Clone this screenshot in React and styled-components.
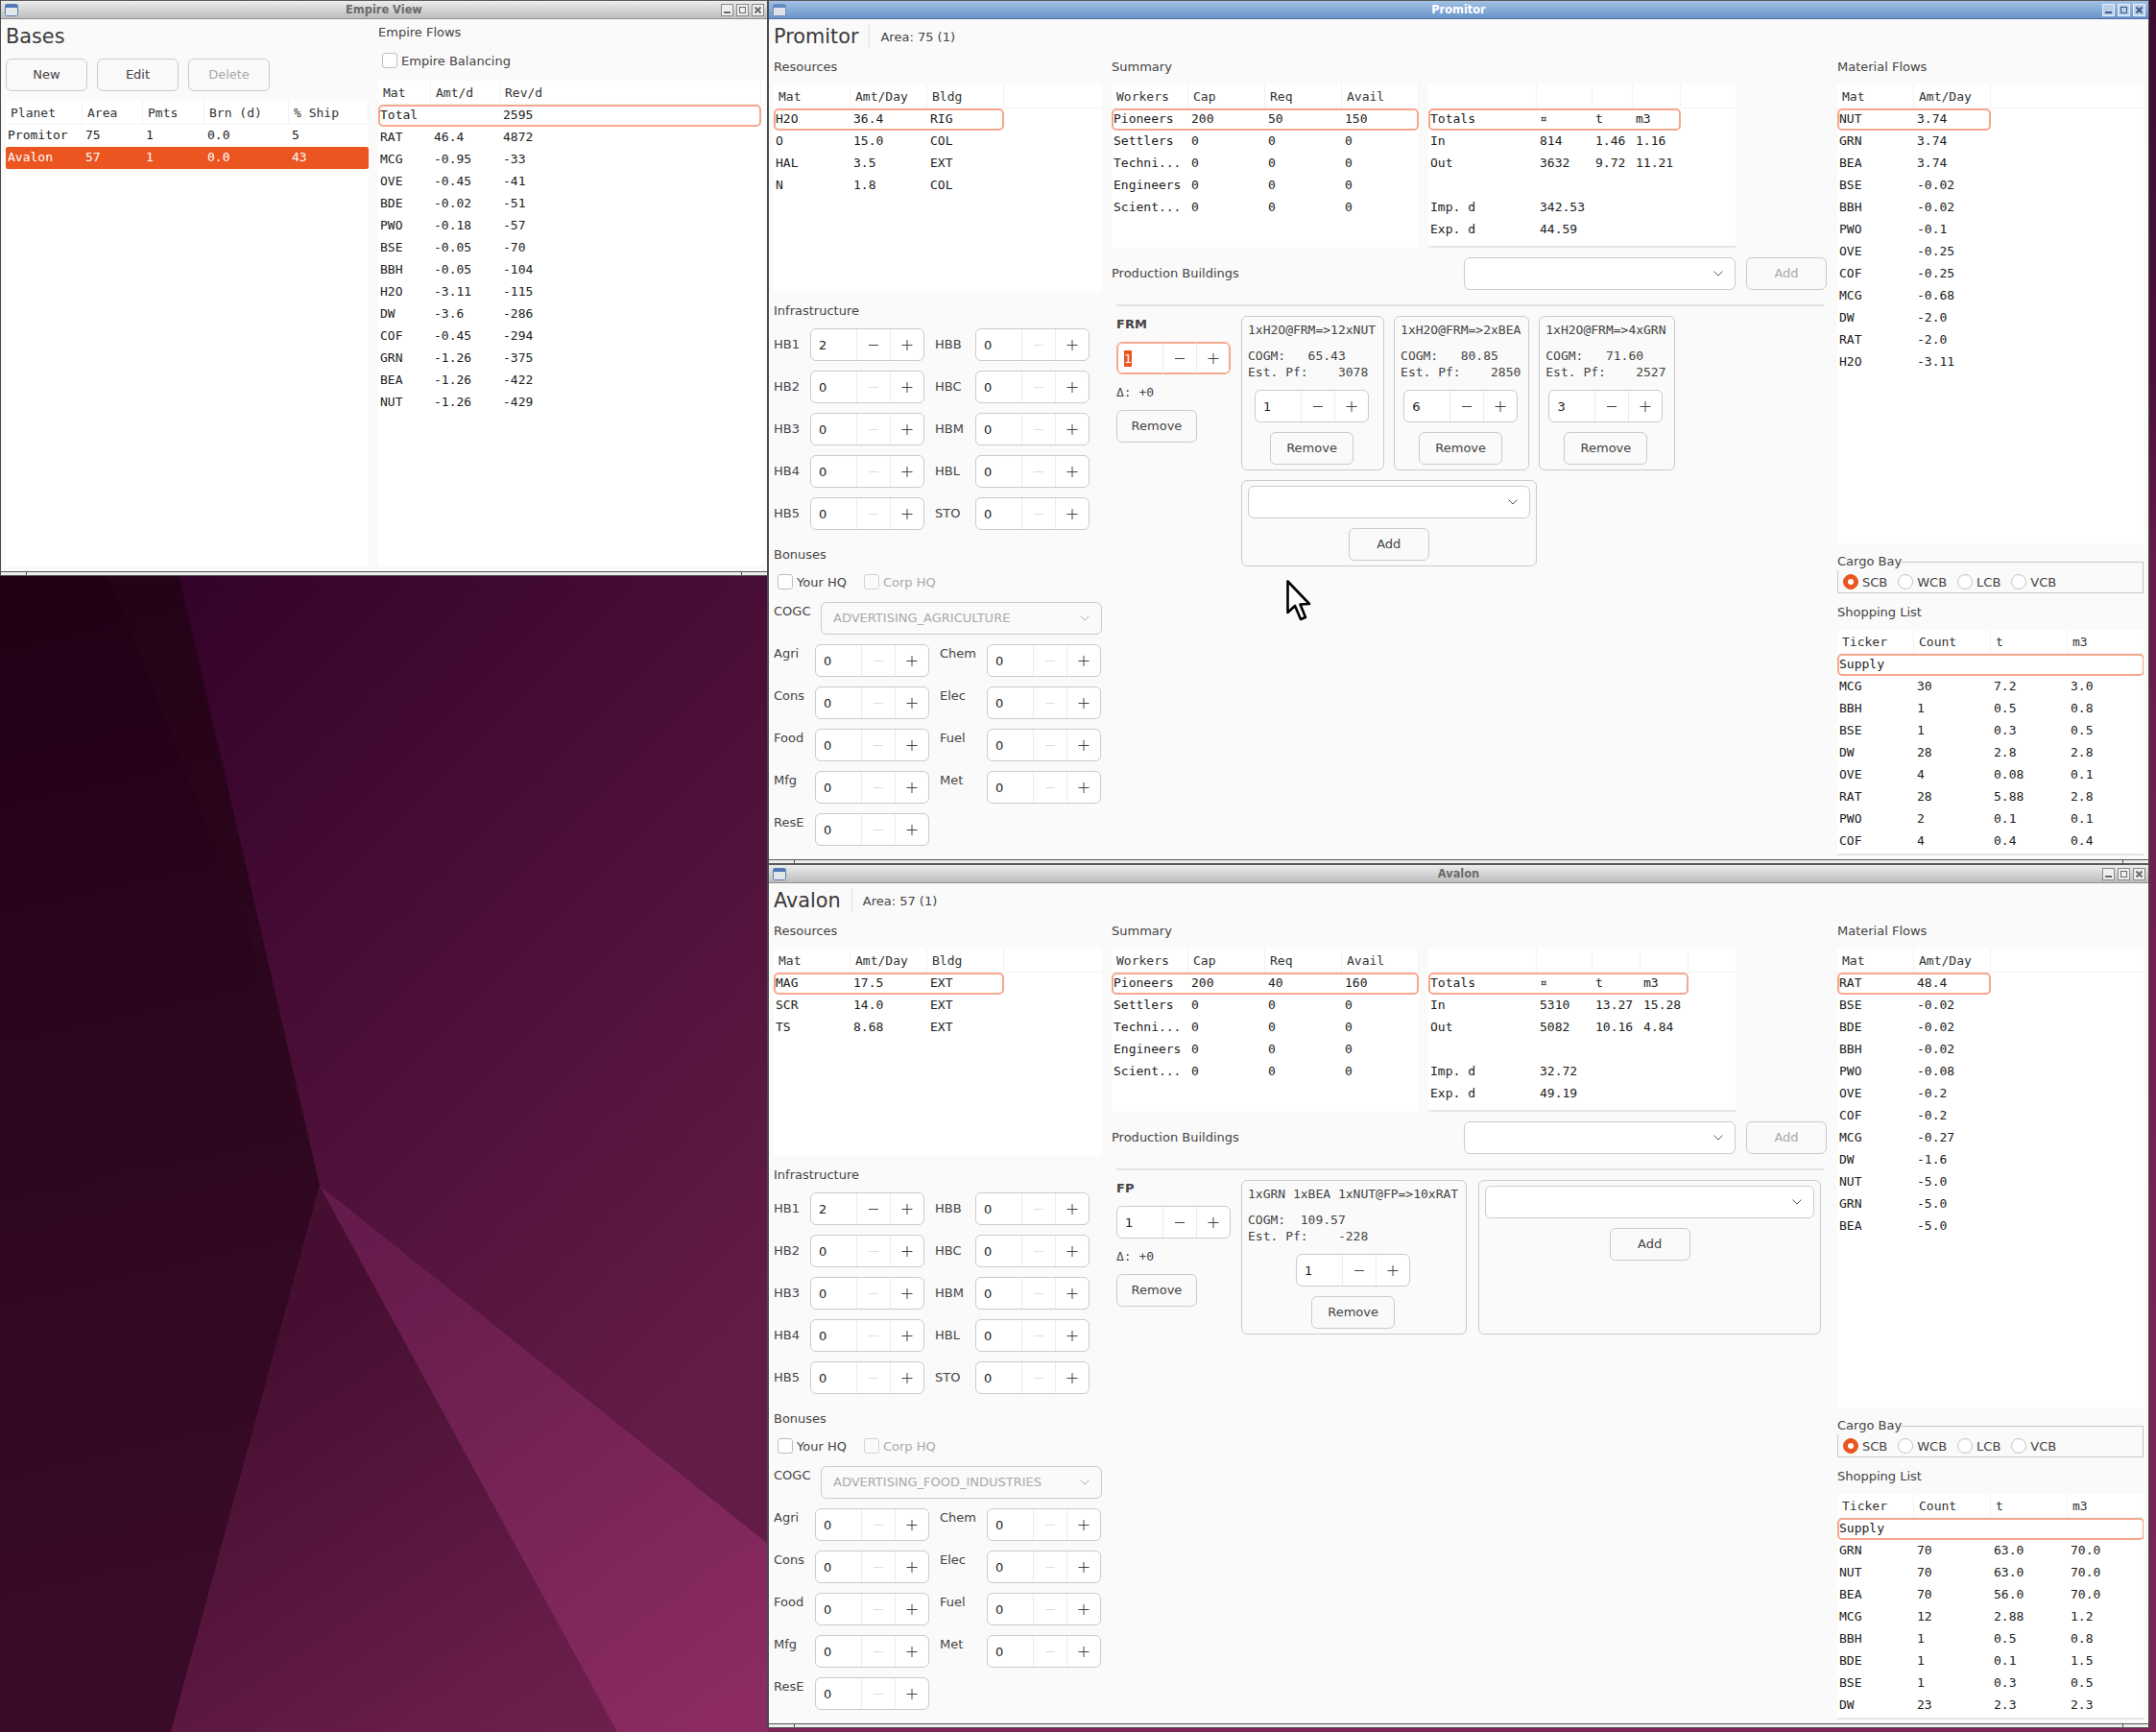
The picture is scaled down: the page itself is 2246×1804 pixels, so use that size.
import React from 'react';
import styled, { createGlobalStyle } from 'styled-components';

const GlobalStyle = createGlobalStyle`
    * { box-sizing: border-box; }
    html, body { margin: 0; padding: 0; background: #2a0a20; }
    body { font-family: "DejaVu Sans", sans-serif; font-size: 13px; color: #333; }
`

const Desktop = styled.div`
    position: relative;
    width: 2246px;
    height: 1804px;
    overflow: hidden;
`
const WallpaperSvg = styled.svg`
    position: absolute;
    left: 0;
    top: 0;
`
const Window = styled.div`
    position: absolute;
    left: ${p => p.$x}px;
    top: ${p => p.$y}px;
    width: ${p => p.$w}px;
    height: ${p => p.$h}px;
    display: flex;
    flex-direction: column;
    background: #fafafa;
    border-left: ${p => p.$edge}px solid #4a4a4a;
    border-right: ${p => (p.$edge > 1 ? 1 : 0)}px solid #4a4a4a;
`
const TitleBar = styled.div`
    position: relative;
    flex: none;
    height: 20px;
    display: flex;
    align-items: center;
    justify-content: center;
    padding-bottom: 1px;
    border-top: 1px solid #5a5a5a;
    border-bottom: 1px solid ${p => (p.$active ? '#4d6f9e' : '#8e8e8e')};
    background: ${p => (p.$active ? 'linear-gradient(#a2c1e5, #6a94c9)' : 'linear-gradient(#ececec, #bdbdbd)')};
    color: ${p => (p.$active ? '#fff' : '#6a6a6a')};
    font-size: 11.4px;
    font-weight: bold;
`
const TitleIcon = styled.svg`
    position: absolute;
    left: 4px;
    top: 3px;
`
const TitleButtons = styled.div`
    position: absolute;
    right: 3px;
    top: 3px;
    display: flex;
    gap: 3px;
`
const TitleButton = styled.svg`
    display: block;
`
const WinBody = styled.div`
    flex: 1;
    min-height: 0;
    overflow: hidden;
    padding-left: 5px;
`
const ResizeBar = styled.div`
    position: relative;
    flex: none;
    height: 5px;
    background: #eeeeee;
    border-top: 1px solid #555;
    border-bottom: 1px solid #555;
    &::before, &::after {
        content: "";
        position: absolute;
        top: 0;
        width: 1px;
        height: 4px;
        background: #555;
    }
    &::before { left: 26px; }
    &::after { right: 26px; }
`
const Columns = styled.div`
    display: flex;
    gap: 10px;
    height: 100%;
`
const Column = styled.div`
    flex: none;
    width: ${p => p.$w}px;
    display: flex;
    flex-direction: column;
    min-height: 0;
`
const Heading = styled.div`
    flex: none;
    height: 36px;
    margin-bottom: 5px;
    display: flex;
    align-items: center;
`
const BigTitle = styled.div`
    font-size: 20.8px;
    color: #3a3a3a;
`
const HeadRule = styled.div`
    width: 1px;
    height: 26px;
    margin: 0 11px 0 11px;
    background: #e0e0e0;
`
const SmallText = styled.div`
    color: #444;
`
const Section = styled.div`
    flex: none;
    height: 18px;
    line-height: 18px;
    margin-top: ${p => p.$top || 0}px;
    margin-bottom: ${p => p.$bottom ?? 9}px;
    color: #444;
`
const TableBox = styled.div`
    flex: ${p => (p.$h ? 'none' : 1)};
    height: ${p => (p.$h ? `${p.$h}px` : 'auto')};
    background: #fff;
    overflow: hidden;
    font-family: "DejaVu Sans Mono", monospace;
    font-size: 13px;
    color: #1c1c1c;
    border-bottom: ${p => (p.$ruled ? '2px solid #e6e6e6' : 'none')};
`
const HeadRow = styled.div`
    display: flex;
    height: 25px;
    border-bottom: 1px solid #f4f4f4;
    color: #333;
`
const HeadCell = styled.div`
    flex: none;
    width: ${p => p.$w}px;
    padding-left: 5px;
    line-height: 25px;
    border-right: 1px solid #f2f2f2;
    white-space: pre;
`
const Row = styled.div`
    display: flex;
    height: 23px;
    width: ${p => (p.$full ? '100%' : 'fit-content')};
    line-height: 21px;
    border-radius: ${p => (p.$mark ? 5 : p.$picked ? 2 : 0)}px;
    box-shadow: ${p => (p.$mark ? 'inset 0 0 0 2px #f6a88e' : 'none')};
    background: ${p => (p.$picked ? '#ea5520' : 'transparent')};
    color: ${p => (p.$picked ? '#fff' : 'inherit')};
`
const Cell = styled.div`
    flex: none;
    width: ${p => p.$w}px;
    padding-left: 3px;
    white-space: pre;
    &:first-child { padding-left: 2px; }
`
const ButtonRow = styled.div`
    flex: none;
    display: flex;
    gap: 10px;
    margin-bottom: 10px;
`
const Button = styled.div`
    flex: none;
    width: ${p => p.$w}px;
    height: 34px;
    display: flex;
    align-items: center;
    justify-content: center;
    padding-bottom: 1px;
    background: #fafafa;
    border: 1px solid #cbcbcb;
    border-radius: 6px;
    color: ${p => (p.$off ? '#a9a9a9' : '#444')};
`
const RecipeButton = styled(Button)`
    margin-top: 10px;
`
const CheckRow = styled.div`
    flex: none;
    display: flex;
    align-items: center;
    gap: 4px;
    height: 16px;
    margin-top: ${p => p.$top}px;
    margin-bottom: ${p => p.$bottom}px;
    padding-left: 4px;
`
const CheckBox = styled.span`
    flex: none;
    width: 16px;
    height: 16px;
    background: ${p => (p.$off ? '#fafafa' : '#fff')};
    border: 1px solid ${p => (p.$off ? '#d4d4d4' : '#bdbdbd')};
    border-radius: 3px;
`
const CheckText = styled.span`
    margin-right: ${p => p.$gap || 0}px;
    color: ${p => (p.$off ? '#a9a9a9' : '#444')};
`
const SpinBox = styled.div`
    flex: none;
    display: flex;
    width: ${p => p.$w || 119}px;
    height: 34px;
    background: #fff;
    border: 1px solid ${p => (p.$focus ? '#f6a88e' : '#cbcbcb')};
    box-shadow: ${p => (p.$focus ? 'inset 0 0 0 1px #f6a88e' : 'none')};
    border-radius: 6px;
`
const SpinValue = styled.div`
    flex: 1;
    display: flex;
    align-items: center;
    padding-left: ${p => (p.$focus ? 7 : 8)}px;
    color: #222;
`
const Selected = styled.span`
    background: #ea5520;
    color: #fff;
    line-height: 17px;
`
const StepCell = styled.div`
    flex: none;
    width: 35px;
    display: flex;
    align-items: center;
    justify-content: center;
    border-left: 1px solid #ececec;
`
const InfraGrid = styled.div`
    flex: none;
    display: grid;
    grid-template-columns: auto auto;
    justify-content: start;
    column-gap: 11px;
    row-gap: 10px;
`
const Pair = styled.div`
    display: flex;
    align-items: ${p => (p.$topAlign ? 'flex-start' : 'center')};
`
const PairLabel = styled.div`
    flex: none;
    width: ${p => p.$w}px;
    margin-top: ${p => p.$nudge || 0}px;
    line-height: 18px;
    color: #444;
`
const ComboBox = styled.div`
    flex: ${p => (p.$w ? 'none' : 1)};
    width: ${p => (p.$w ? `${p.$w}px` : 'auto')};
    height: 34px;
    display: flex;
    align-items: center;
    justify-content: space-between;
    padding: 0 12px 1px;
    background: ${p => (p.$off ? '#fafafa' : '#fff')};
    border: 1px solid #cbcbcb;
    border-radius: 6px;
    color: #a9a9a9;
`
const CogcRow = styled.div`
    flex: none;
    display: flex;
    align-items: flex-start;
    margin-top: 13px;
    margin-bottom: 10px;
`
const TableRow = styled.div`
    flex: none;
    display: flex;
    gap: 10px;
`
const ProdHeader = styled.div`
    flex: none;
    display: flex;
    align-items: center;
    gap: 11px;
    margin-top: 10px;
    padding-right: 1px;
`
const ProdLabel = styled.div`
    flex: 1;
    padding-bottom: 1px;
    color: #444;
`
const ProdRule = styled.div`
    flex: none;
    height: 2px;
    margin: 15px 4px 10px 5px;
    background: #e2e2e2;
`
const Building = styled.div`
    display: flex;
    gap: 11px;
    padding-left: 5px;
`
const BuildingInfo = styled.div`
    flex: none;
    width: 119px;
`
const BuildingName = styled.div`
    height: 18px;
    line-height: 18px;
    margin-bottom: 9px;
    font-weight: bold;
    color: #444;
`
const Delta = styled.div`
    height: 18px;
    line-height: 18px;
    margin: 10px 0 9px;
    font-family: "DejaVu Sans Mono", monospace;
    color: #444;
`
const Recipes = styled.div`
    display: flex;
    flex-direction: ${p => (p.$stack ? 'column' : 'row')};
    flex: ${p => (p.$stack ? 'none' : 1)};
    align-items: ${p => (p.$stack ? 'flex-start' : 'stretch')};
    gap: ${p => (p.$stack ? 10 : 12)}px;
    padding-right: ${p => (p.$stack ? 0 : 7)}px;
`
const RecipeRow = styled.div`
    display: flex;
    gap: 10px;
`
const RecipeCard = styled.div`
    flex: none;
    display: flex;
    flex-direction: column;
    align-items: center;
    padding: 5px 8px 5px 6px;
    border: 1px solid #cbcbcb;
    border-radius: 6px;
`
const Mono = styled.div`
    align-self: stretch;
    font-family: "DejaVu Sans Mono", monospace;
    font-size: 13px;
    line-height: ${p => p.$lh}px;
    margin-bottom: ${p => p.$bottom}px;
    white-space: pre;
    color: #444;
`
const AddCard = styled.div`
    flex: ${p => (p.$w ? 'none' : 1)};
    width: ${p => (p.$w ? `${p.$w}px` : 'auto')};
    display: flex;
    flex-direction: column;
    align-items: center;
    gap: 10px;
    padding: 5px 6px;
    border: 1px solid #cbcbcb;
    border-radius: 6px;
`
const AddCombo = styled(ComboBox)`
    flex: none;
    align-self: stretch;
`
const Fieldset = styled.fieldset`
    flex: none;
    margin: 10px 0 0;
    padding: 3px 5px 2px;
    border: 1px solid #c8c8c8;
    legend {
        padding: 0;
        margin-left: -6px;
        line-height: 18px;
        color: #444;
    }
`
const RadioRow = styled.div`
    display: flex;
    align-items: center;
    gap: 11px;
    height: 18px;
`
const RadioItem = styled.div`
    display: flex;
    align-items: center;
    gap: 4px;
    color: #444;
`
const RadioDot = styled.span`
    flex: none;
    width: 16px;
    height: 16px;
    border-radius: 50%;
    background: ${p => (p.$on ? '#ea5520' : '#fff')};
    border: 1px solid ${p => (p.$on ? '#ea5520' : '#c4c4c4')};
    display: flex;
    align-items: center;
    justify-content: center;
    &::after {
        content: "";
        width: 6px;
        height: 6px;
        border-radius: 50%;
        background: ${p => (p.$on ? '#fff' : 'transparent')};
    }
`
const PointerSvg = styled.svg`
    position: absolute;
    left: 1339px;
    top: 603px;
`

const Wallpaper = () => (
    <WallpaperSvg width="2246" height="1804" viewBox="0 0 2246 1804">
        <defs>
            <linearGradient id="wallTop" gradientUnits="userSpaceOnUse" x1="190" y1="600" x2="880" y2="1290">
                <stop offset="0" stopColor="#34022a" />
                <stop offset="1" stopColor="#621c45" />
            </linearGradient>
            <linearGradient id="wallLeft" gradientUnits="userSpaceOnUse" x1="60" y1="620" x2="300" y2="1700">
                <stop offset="0" stopColor="#210016" />
                <stop offset="1" stopColor="#3a0b28" />
            </linearGradient>
            <linearGradient id="wallBottom" gradientUnits="userSpaceOnUse" x1="290" y1="1400" x2="560" y2="1804">
                <stop offset="0" stopColor="#460f31" />
                <stop offset="1" stopColor="#6c1f4b" />
            </linearGradient>
            <linearGradient id="wallWedge" gradientUnits="userSpaceOnUse" x1="400" y1="1290" x2="760" y2="1780">
                <stop offset="0" stopColor="#651b4b" />
                <stop offset="1" stopColor="#8b2b61" />
            </linearGradient>
            <linearGradient id="wallStrip" gradientUnits="userSpaceOnUse" x1="0" y1="0" x2="0" y2="1804">
                <stop offset="0" stopColor="#3c0c30" />
                <stop offset="0.22" stopColor="#4a1238" />
                <stop offset="0.33" stopColor="#661b47" />
                <stop offset="0.5" stopColor="#6f1f4f" />
                <stop offset="1" stopColor="#7c2559" />
            </linearGradient>
        </defs>
        <rect width="2246" height="1804" fill="url(#wallTop)" />
        <polygon points="0,598 186,598 333,1235 178,1804 0,1804" fill="url(#wallLeft)" />
        <polygon points="112,598 186,598 333,1235 255,960" fill="#3a1a2a" fillOpacity="0.1" />
        <polygon points="333,1235 643,1804 178,1804" fill="url(#wallBottom)" />
        <polygon points="333,1235 800,1608 2246,1608 2246,1804 643,1804" fill="url(#wallWedge)" />
        <rect x="2238" width="8" height="1804" fill="url(#wallStrip)" />
        <rect x="800" y="1800" width="1446" height="4" fill="#7f2558" />
    </WallpaperSvg>
);

const WindowIcon = ({ active }) => (
    <TitleIcon width="14" height="13" viewBox="0 0 14 13">
        <rect x="0.5" y="0.5" width="13" height="12" rx="1" fill={active ? '#dfe3e8' : '#e3e6ea'} stroke={active ? '#6c8fbd' : '#5b7fb4'} />
        <rect x="1" y="1" width="12" height="3" fill={active ? '#5f87bd' : '#4f77b3'} />
    </TitleIcon>
);

const WinBtn = ({ active, kind }) => {
    const ink = active ? '#3c5c88' : '#6a6a6a';
    return (
        <TitleButton width="13" height="13" viewBox="0 0 13 13">
            <rect x="0.5" y="0.5" width="12" height="12" fill={active ? '#b8cfe9' : '#efefef'} stroke={active ? '#e8f0f8' : '#8a8a8a'} />
            {kind === 'min' && <rect x="3" y="8" width="7" height="2" fill={ink} />}
            {kind === 'max' && <rect x="3.5" y="3.5" width="6" height="6" fill="none" stroke={ink} />}
            {kind === 'close' && <path d="M3.5 3.5 L9.5 9.5 M9.5 3.5 L3.5 9.5" stroke={ink} strokeWidth="2" />}
        </TitleButton>
    );
};

const Frame = ({ title, active, x, y, w, h, edge, children }) => (
    <Window $x={x} $y={y} $w={w} $h={h} $edge={edge}>
        <TitleBar $active={active}>
            <WindowIcon active={active} />
            {title}
            <TitleButtons>
                <WinBtn active={active} kind="min" />
                <WinBtn active={active} kind="max" />
                <WinBtn active={active} kind="close" />
            </TitleButtons>
        </TitleBar>
        <WinBody>{children}</WinBody>
        <ResizeBar />
    </Window>
);

const DataTable = ({ cols, head, rows, height, ruled, mark, picked, full }) => (
    <TableBox $h={height} $ruled={ruled}>
        <HeadRow>
            {head.map((text, i) => <HeadCell key={i} $w={cols[i]}>{text}</HeadCell>)}
        </HeadRow>
        {rows.map((cells, r) => (
            <Row key={r} $mark={mark && r === 0} $picked={picked === r} $full={full}>
                {cells.map((text, i) => <Cell key={i} $w={cols[i]}>{text}</Cell>)}
            </Row>
        ))}
    </TableBox>
);

const Spinner = ({ value, width, focus }) => (
    <SpinBox $w={width} $focus={focus}>
        <SpinValue $focus={focus}>{focus ? <Selected>{value}</Selected> : value}</SpinValue>
        <StepCell>
            <svg width="12" height="12" viewBox="0 0 12 12">
                <path d="M1 6.5 H11" stroke={value === '0' ? '#dcdcdc' : '#444'} />
            </svg>
        </StepCell>
        <StepCell>
            <svg width="12" height="12" viewBox="0 0 12 12">
                <path d="M0.5 6.5 H11.5 M6 1 V12" stroke="#444" />
            </svg>
        </StepCell>
    </SpinBox>
);

const Chevron = ({ off }) => (
    <svg width="10" height="6" viewBox="0 0 10 6">
        <path d="M0.5 0.5 L5 5 L9.5 0.5" fill="none" stroke={off ? '#aaa' : '#555'} />
    </svg>
);

const Combo = ({ text, width, off }) => (
    <ComboBox $w={width} $off={off}>
        <span>{text}</span>
        <Chevron off={off} />
    </ComboBox>
);

const Recipe = ({ title, cost, profit, count }) => (
    <RecipeCard>
        <Mono $lh={18} $bottom={9}>{title}</Mono>
        <Mono $lh={17} $bottom={10}>{cost}{'\n'}{profit}</Mono>
        <Spinner value={count} />
        <RecipeButton $w={87}>Remove</RecipeButton>
    </RecipeCard>
);

const AddBox = ({ width }) => (
    <AddCard $w={width}>
        <AddCombo>
            <span />
            <Chevron />
        </AddCombo>
        <Button $w={84}>Add</Button>
    </AddCard>
);

const INFRA = [['HB1', '2', 'HBB'], ['HB2', '0', 'HBC'], ['HB3', '0', 'HBM'], ['HB4', '0', 'HBL'], ['HB5', '0', 'STO']];
const BONUS = [['Agri', 'Chem'], ['Cons', 'Elec'], ['Food', 'Fuel'], ['Mfg', 'Met'], ['ResE']];
const CARGO = ['SCB', 'WCB', 'LCB', 'VCB'];

const BaseWindow = ({ data, y, active }) => (
    <Frame title={data.name} active={active} x={799} y={y} w={1440} h={900} edge={2}>
        <Heading>
            <BigTitle>{data.name}</BigTitle>
            <HeadRule />
            <SmallText>{data.area}</SmallText>
        </Heading>
        <Columns>
            <Column $w={342}>
                <Section>Resources</Section>
                <DataTable cols={[80, 80, 80]} head={['Mat', 'Amt/Day', 'Bldg']} rows={data.resources} height={216} mark />
                <Section $top={11}>Infrastructure</Section>
                <InfraGrid>
                    {INFRA.map(([a, val, b]) => (
                        <React.Fragment key={a}>
                            <Pair><PairLabel $w={38}>{a}</PairLabel><Spinner value={val} /></Pair>
                            <Pair><PairLabel $w={42}>{b}</PairLabel><Spinner value="0" /></Pair>
                        </React.Fragment>
                    ))}
                </InfraGrid>
                <Section $top={17}>Bonuses</Section>
                <CheckRow $top={2} $bottom={0}>
                    <CheckBox />
                    <CheckText $gap={14}>Your HQ</CheckText>
                    <CheckBox $off />
                    <CheckText $off>Corp HQ</CheckText>
                </CheckRow>
                <CogcRow>
                    <PairLabel $w={49} $nudge={1}>COGC</PairLabel>
                    <Combo text={data.cogc} width={293} off />
                </CogcRow>
                <InfraGrid>
                    {BONUS.map(([a, b]) => (
                        <React.Fragment key={a}>
                            <Pair $topAlign><PairLabel $w={43} $nudge={1}>{a}</PairLabel><Spinner value="0" /></Pair>
                            {b && <Pair $topAlign><PairLabel $w={49} $nudge={1}>{b}</PairLabel><Spinner value="0" /></Pair>}
                        </React.Fragment>
                    ))}
                </InfraGrid>
            </Column>
            <Column $w={746}>
                <Section>Summary</Section>
                <TableRow>
                    <Column $w={320}>
                        <DataTable cols={[80, 80, 80, 80]} head={['Workers', 'Cap', 'Req', 'Avail']} rows={data.workers} height={170} mark />
                    </Column>
                    <Column $w={320}>
                        <DataTable cols={data.totalCols} head={['', '', '', '']} rows={data.totals} height={170} mark ruled />
                    </Column>
                </TableRow>
                <ProdHeader>
                    <ProdLabel>Production Buildings</ProdLabel>
                    <Combo width={283} />
                    <Button $w={84} $off>Add</Button>
                </ProdHeader>
                <ProdRule />
                <Building>
                    <BuildingInfo>
                        <BuildingName>{data.building}</BuildingName>
                        <Spinner value="1" focus={data.focus} />
                        <Delta>Δ: +0</Delta>
                        <Button $w={84}>Remove</Button>
                    </BuildingInfo>
                    <Recipes $stack={data.stack}>
                        {data.stack ? (
                            <>
                                <RecipeRow>
                                    {data.recipes.map(r => <Recipe key={r.title} {...r} />)}
                                </RecipeRow>
                                <AddBox width={307.5} />
                            </>
                        ) : (
                            <>
                                {data.recipes.map(r => <Recipe key={r.title} {...r} />)}
                                <AddBox />
                            </>
                        )}
                    </Recipes>
                </Building>
            </Column>
            <Column $w={319}>
                <Section>Material Flows</Section>
                <DataTable cols={[80, 80]} head={['Mat', 'Amt/Day']} rows={data.flows} height={478} mark />
                <Fieldset>
                    <legend>Cargo Bay</legend>
                    <RadioRow>
                        {CARGO.map((c, i) => (
                            <RadioItem key={c}>
                                <RadioDot $on={i === 0} />
                                {c}
                            </RadioItem>
                        ))}
                    </RadioRow>
                </Fieldset>
                <Section $top={11}>Shopping List</Section>
                <DataTable cols={[80, 80, 80, 80]} head={['Ticker', 'Count', 't', 'm3']} rows={data.shopping} height={235} mark ruled />
            </Column>
        </Columns>
    </Frame>
);

const PROMITOR = {
    name: 'Promitor',
    area: 'Area: 75 (1)',
    cogc: 'ADVERTISING_AGRICULTURE',
    building: 'FRM',
    focus: true,
    stack: true,
    totalCols: [113, 58, 42, 50],
    resources: [['H2O', '36.4', 'RIG'], ['O', '15.0', 'COL'], ['HAL', '3.5', 'EXT'], ['N', '1.8', 'COL']],
    workers: [
        ['Pioneers', '200', '50', '150'],
        ['Settlers', '0', '0', '0'],
        ['Techni...', '0', '0', '0'],
        ['Engineers', '0', '0', '0'],
        ['Scient...', '0', '0', '0'],
    ],
    totals: [
        ['Totals', '¤', 't', 'm3'],
        ['In', '814', '1.46', '1.16'],
        ['Out', '3632', '9.72', '11.21'],
        ['', '', '', ''],
        ['Imp. d', '342.53', '', ''],
        ['Exp. d', '44.59', '', ''],
    ],
    recipes: [
        { title: '1xH2O@FRM=>12xNUT', cost: 'COGM:   65.43', profit: 'Est. Pf:    3078', count: '1' },
        { title: '1xH2O@FRM=>2xBEA', cost: 'COGM:   80.85', profit: 'Est. Pf:    2850', count: '6' },
        { title: '1xH2O@FRM=>4xGRN', cost: 'COGM:   71.60', profit: 'Est. Pf:    2527', count: '3' },
    ],
    flows: [
        ['NUT', '3.74'], ['GRN', '3.74'], ['BEA', '3.74'], ['BSE', '-0.02'], ['BBH', '-0.02'], ['PWO', '-0.1'],
        ['OVE', '-0.25'], ['COF', '-0.25'], ['MCG', '-0.68'], ['DW', '-2.0'], ['RAT', '-2.0'], ['H2O', '-3.11'],
    ],
    shopping: [
        ['Supply', '', '', ''],
        ['MCG', '30', '7.2', '3.0'],
        ['BBH', '1', '0.5', '0.8'],
        ['BSE', '1', '0.3', '0.5'],
        ['DW', '28', '2.8', '2.8'],
        ['OVE', '4', '0.08', '0.1'],
        ['RAT', '28', '5.88', '2.8'],
        ['PWO', '2', '0.1', '0.1'],
        ['COF', '4', '0.4', '0.4'],
    ],
};

const AVALON = {
    name: 'Avalon',
    area: 'Area: 57 (1)',
    cogc: 'ADVERTISING_FOOD_INDUSTRIES',
    building: 'FP',
    focus: false,
    stack: false,
    totalCols: [113, 58, 50, 50],
    resources: [['MAG', '17.5', 'EXT'], ['SCR', '14.0', 'EXT'], ['TS', '8.68', 'EXT']],
    workers: [
        ['Pioneers', '200', '40', '160'],
        ['Settlers', '0', '0', '0'],
        ['Techni...', '0', '0', '0'],
        ['Engineers', '0', '0', '0'],
        ['Scient...', '0', '0', '0'],
    ],
    totals: [
        ['Totals', '¤', 't', 'm3'],
        ['In', '5310', '13.27', '15.28'],
        ['Out', '5082', '10.16', '4.84'],
        ['', '', '', ''],
        ['Imp. d', '32.72', '', ''],
        ['Exp. d', '49.19', '', ''],
    ],
    recipes: [
        { title: '1xGRN 1xBEA 1xNUT@FP=>10xRAT', cost: 'COGM:  109.57', profit: 'Est. Pf:    -228', count: '1' },
    ],
    flows: [
        ['RAT', '48.4'], ['BSE', '-0.02'], ['BDE', '-0.02'], ['BBH', '-0.02'], ['PWO', '-0.08'], ['OVE', '-0.2'],
        ['COF', '-0.2'], ['MCG', '-0.27'], ['DW', '-1.6'], ['NUT', '-5.0'], ['GRN', '-5.0'], ['BEA', '-5.0'],
    ],
    shopping: [
        ['Supply', '', '', ''],
        ['GRN', '70', '63.0', '70.0'],
        ['NUT', '70', '63.0', '70.0'],
        ['BEA', '70', '56.0', '70.0'],
        ['MCG', '12', '2.88', '1.2'],
        ['BBH', '1', '0.5', '0.8'],
        ['BDE', '1', '0.1', '1.5'],
        ['BSE', '1', '0.3', '0.5'],
        ['DW', '23', '2.3', '2.3'],
    ],
};

const BASES = [
    ['Promitor', '75', '1', '0.0', '5'],
    ['Avalon', '57', '1', '0.0', '43'],
];

const EMPIRE_FLOWS = [
    ['Total', '', '2595'],
    ['RAT', '46.4', '4872'],
    ['MCG', '-0.95', '-33'],
    ['OVE', '-0.45', '-41'],
    ['BDE', '-0.02', '-51'],
    ['PWO', '-0.18', '-57'],
    ['BSE', '-0.05', '-70'],
    ['BBH', '-0.05', '-104'],
    ['H2O', '-3.11', '-115'],
    ['DW', '-3.6', '-286'],
    ['COF', '-0.45', '-294'],
    ['GRN', '-1.26', '-375'],
    ['BEA', '-1.26', '-422'],
    ['NUT', '-1.26', '-429'],
];

const EmpireColumn = styled(Column)`
    padding-bottom: 6px;
`
const EmpireSection = styled(Section)`
    margin-top: 5px;
    margin-bottom: 12px;
`

const EmpireWindow = () => (
    <Frame title="Empire View" x={0} y={0} w={799} h={600} edge={1}>
        <Columns>
            <EmpireColumn $w={378}>
                <Heading>
                    <BigTitle>Bases</BigTitle>
                </Heading>
                <ButtonRow>
                    <Button $w={85}>New</Button>
                    <Button $w={85}>Edit</Button>
                    <Button $w={85} $off>Delete</Button>
                </ButtonRow>
                <DataTable cols={[80, 63, 64, 88, 83]} head={['Planet', 'Area', 'Pmts', 'Brn (d)', '% Ship']} rows={BASES} picked={1} full />
            </EmpireColumn>
            <EmpireColumn $w={403}>
                <EmpireSection>Empire Flows</EmpireSection>
                <CheckRow $top={0} $bottom={13}>
                    <CheckBox />
                    <CheckText>Empire Balancing</CheckText>
                </CheckRow>
                <DataTable cols={[55, 72, 272]} head={['Mat', 'Amt/d', 'Rev/d']} rows={EMPIRE_FLOWS} mark />
            </EmpireColumn>
        </Columns>
    </Frame>
);

const App = () => (
    <Desktop>
        <GlobalStyle />
        <Wallpaper />
        <EmpireWindow />
        <BaseWindow data={PROMITOR} y={0} active />
        <BaseWindow data={AVALON} y={900} />
        <PointerSvg width="28" height="46" viewBox="0 0 28 46">
            <path d="M2.5 2.5 L2.5 35 L10 28 L16 42 L21 40 L15.5 26.5 L25 26 Z" fill="#fff" stroke="#000" strokeWidth="2.6" strokeLinejoin="round" />
        </PointerSvg>
    </Desktop>
);

export default App;
